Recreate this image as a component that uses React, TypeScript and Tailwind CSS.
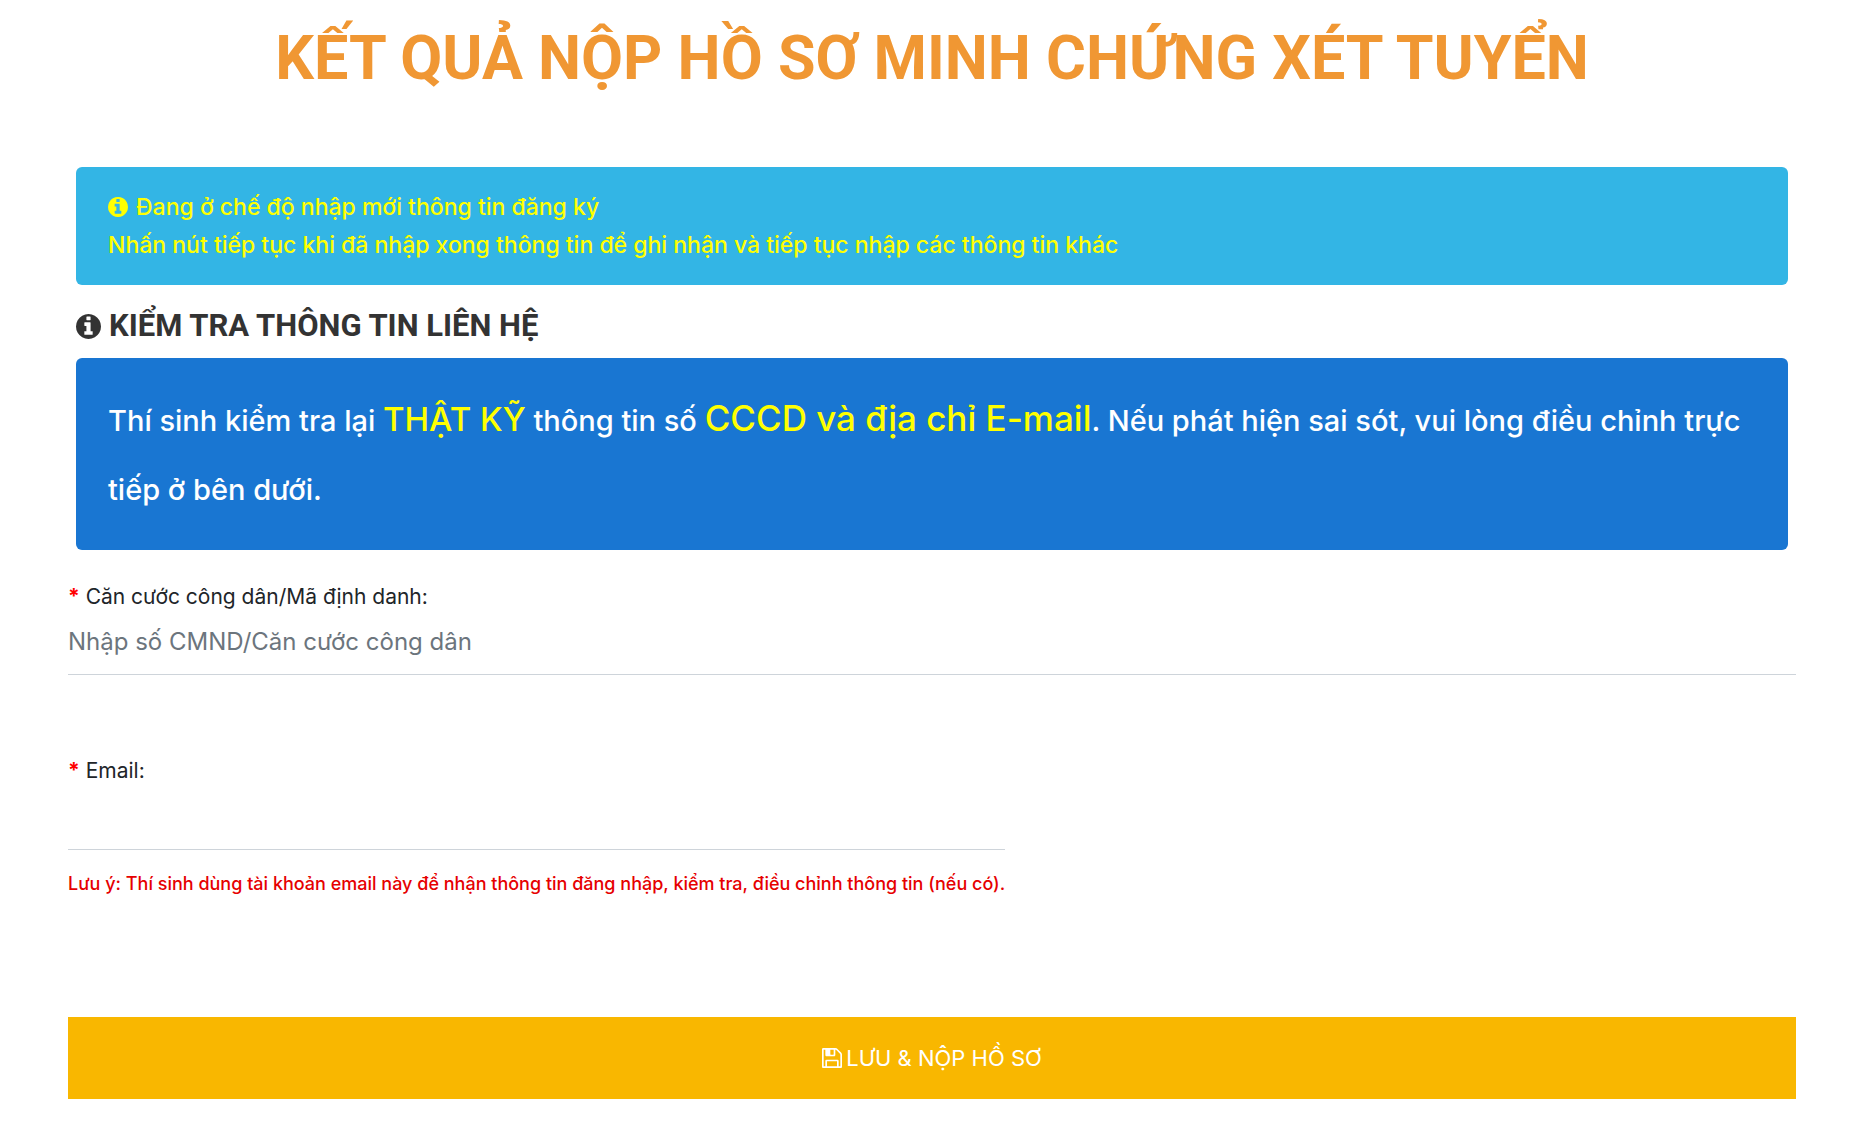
const InfoIcon = ({ className }: { className: string }) => (
  <svg viewBox="0 128 1536 1536" fill="currentColor" aria-hidden="true" className={className}>
    <path d="M1024 1376v-160q0-14-9-23t-23-9h-96v-512q0-14-9-23t-23-9h-320q-14 0-23 9t-9 23v160q0 14 9 23t23 9h96v320h-96q-14 0-23 9t-9 23v160q0 14 9 23t23 9h448q14 0 23-9t9-23zm-128-896v-160q0-14-9-23t-23-9h-192q-14 0-23 9t-9 23v160q0 14 9 23t23 9h192q14 0 23-9t9-23zm640 416q0 209-103 385.5t-279.5 279.5-385.5 103-385.5-103-279.5-279.5-103-385.5 103-385.5 279.5-279.5 385.5-103 385.5 103 279.5 279.5 103 385.5z" />
  </svg>
);

const SaveIcon = ({ className }: { className: string }) => (
  <svg viewBox="0 128 1536 1536" fill="currentColor" aria-hidden="true" className={className}>
    <path d="M384 1536h768v-384h-768v384zm896 0h128v-896q0-14-10-38.5t-20-34.5l-281-281q-10-10-34-20t-39-10v416q0 40-28 68t-68 28h-576q-40 0-68-28t-28-68v-416h-128v1280h128v-416q0-40 28-68t68-28h832q40 0 68 28t28 68v416zm-384-928v-320q0-13-9.5-22.5t-22.5-9.5h-192q-13 0-22.5 9.5t-9.5 22.5v320q0 13 9.5 22.5t22.5 9.5h192q13 0 22.5-9.5t9.5-22.5zm640 32v928q0 40-28 68t-68 28h-1344q-40 0-68-28t-28-68v-1344q0-40 28-68t68-28h928q40 0 88 20t76 48l280 280q28 28 48 76t20 88z" />
  </svg>
);

const App = () => {
  return (
    <main className="min-h-screen bg-white pt-4 pr-[62px] pb-11 pl-17 font-['Inter','Noto_Sans',sans-serif] text-[#212529]">
      <h1 className="pt-[2px] text-center font-['Roboto',sans-serif] text-[61px] leading-20 font-bold text-[#f09733]">
        KẾT QUẢ NỘP HỒ SƠ MINH CHỨNG XÉT TUYỂN
      </h1>

      <form onSubmit={(e) => e.preventDefault()}>
        <section className="px-2 pt-[69px]">
          <div className="rounded-md bg-[#33b5e5] px-8 pt-[21px] pb-[21px] text-[23px] leading-[38px] font-medium text-[#ffff00]">
            <p className="flex items-center gap-2">
              <InfoIcon className="size-5" />
              Đang ở chế độ nhập mới thông tin đăng ký
            </p>
            <p>Nhấn nút tiếp tục khi đã nhập xong thông tin để ghi nhận và tiếp tục nhập các thông tin khác</p>
          </div>

          <h2 className="flex items-center gap-2 pt-[21px] pb-3 font-['Roboto',sans-serif] text-[31px] leading-10 font-bold text-[#333333]">
            <InfoIcon className="size-[25px]" />
            KIỂM TRA THÔNG TIN LIÊN HỆ
          </h2>

          <div className="rounded-md bg-[#1976d2] px-8 py-[26px] text-[29px] leading-[69px] font-medium text-white">
            Thí sinh kiểm tra lại <span className="text-[33px] text-[#ffff00]">THẬT KỸ</span> thông tin số{" "}
            <span className="text-[35px] text-[#ffff00]">CCCD và địa chỉ E-mail</span>. Nếu phát hiện sai sót, vui lòng
            điều chỉnh trực tiếp ở bên dưới.
          </div>
        </section>

        <div className="mt-[31px]">
          <label htmlFor="citizenId" className="block text-[21px] leading-8">
            <span className="font-bold text-[#ff0000]">*</span> Căn cước công dân/Mã định danh:
          </label>
          <input
            id="citizenId"
            type="text"
            placeholder="Nhập số CMND/Căn cước công dân"
            className="block h-[62px] w-full border-b border-[#ced4da] pb-1 text-[24px] outline-none placeholder:text-[#6c757d]"
          />
        </div>

        <div className="mt-20 w-fit">
          <label htmlFor="email" className="block text-[21px] leading-8">
            <span className="font-bold text-[#ff0000]">*</span> Email:
          </label>
          <input
            id="email"
            type="email"
            className="block h-[63px] w-full border-b border-[#ced4da] pb-1 text-[24px] outline-none"
          />
          <p className="pt-5 text-[18px] leading-7 font-medium text-[#e60000]">
            Lưu ý: Thí sinh dùng tài khoản email này để nhận thông tin đăng nhập, kiểm tra, điều chỉnh thông tin (nếu có).
          </p>
        </div>

        <button
          type="submit"
          className="mt-[119px] flex h-[82px] w-full items-center justify-center gap-1 bg-[#f9b700] text-[22px] text-white"
        >
          <SaveIcon className="size-5" />
          LƯU &amp; NỘP HỒ SƠ
        </button>
      </form>
    </main>
  );
};

export default App;
